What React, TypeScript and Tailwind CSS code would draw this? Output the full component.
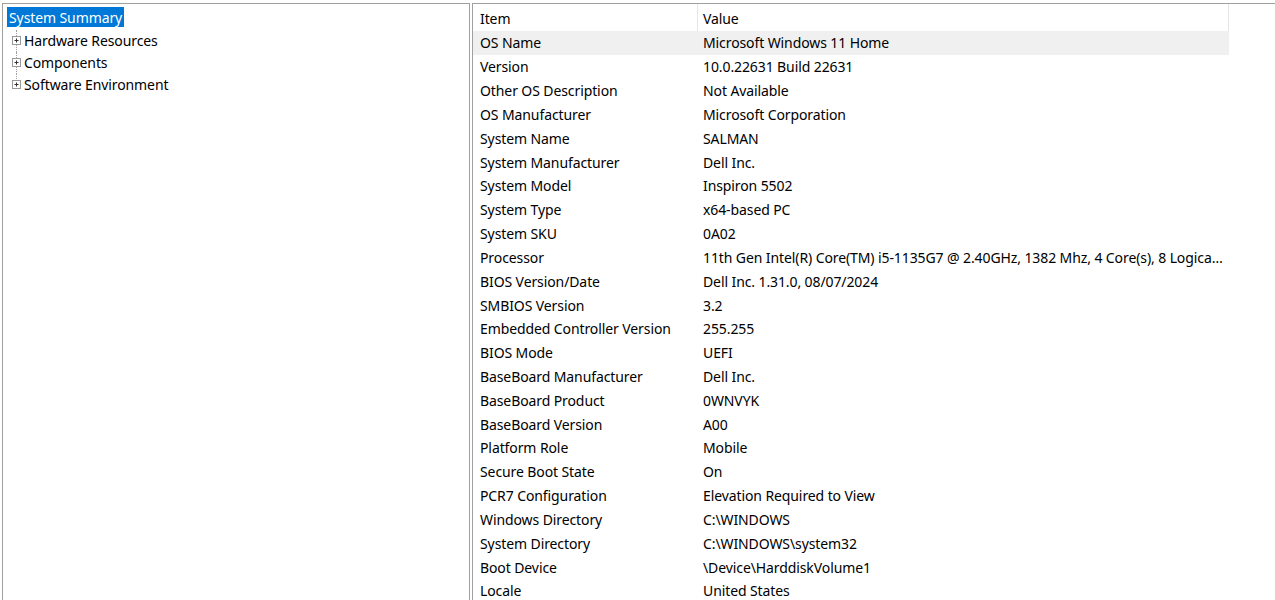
import type { ReactNode } from 'react'

const ROWS: [string, string][] = [
  ['OS Name', 'Microsoft Windows 11 Home'],
  ['Version', '10.0.22631 Build 22631'],
  ['Other OS Description', 'Not Available'],
  ['OS Manufacturer', 'Microsoft Corporation'],
  ['System Name', 'SALMAN'],
  ['System Manufacturer', 'Dell Inc.'],
  ['System Model', 'Inspiron 5502'],
  ['System Type', 'x64-based PC'],
  ['System SKU', '0A02'],
  [
    'Processor',
    '11th Gen Intel(R) Core(TM) i5-1135G7 @ 2.40GHz, 1382 Mhz, 4 Core(s), 8 Logical Processor(s)',
  ],
  ['BIOS Version/Date', 'Dell Inc. 1.31.0, 08/07/2024'],
  ['SMBIOS Version', '3.2'],
  ['Embedded Controller Version', '255.255'],
  ['BIOS Mode', 'UEFI'],
  ['BaseBoard Manufacturer', 'Dell Inc.'],
  ['BaseBoard Product', '0WNVYK'],
  ['BaseBoard Version', 'A00'],
  ['Platform Role', 'Mobile'],
  ['Secure Boot State', 'On'],
  ['PCR7 Configuration', 'Elevation Required to View'],
  ['Windows Directory', 'C:\\WINDOWS'],
  ['System Directory', 'C:\\WINDOWS\\system32'],
  ['Boot Device', '\\Device\\HarddiskVolume1'],
  ['Locale', 'United States'],
]

function PlusBox() {
  return (
    <svg width="11" height="11" viewBox="0 0 11 11" className="shrink-0">
      <rect x="1.5" y="1.5" width="8" height="8" fill="white" stroke="#9a9a9a" />
      <path d="M3.5 5.5h4M5.5 3.5v4" stroke="#333" />
    </svg>
  )
}

function TreeNode({ children, last }: { children: ReactNode; last?: boolean }) {
  return (
    <div className="relative flex h-[22px] items-center pl-[8px]">
      {/* dotted connector */}
      <span
        className={`absolute left-[13px] top-0 border-l border-dotted border-[#a0a0a0] ${
          last ? 'h-[11px]' : 'h-[22px]'
        }`}
      />
      <span className="relative z-10">
        <PlusBox />
      </span>
      <span className="ml-[2px] pt-[1px] text-black">{children}</span>
    </div>
  )
}

export default function App() {
  return (
    <div
      className="flex h-[600px] w-[1275px] overflow-hidden bg-white pt-[3px] text-[14px] leading-[20px] tracking-[-0.1px]"
      style={{ fontFamily: '"Segoe UI", "Noto Sans", "Liberation Sans", sans-serif' }}
    >
      {/* left tree */}
      <div className="ml-[2px] h-[700px] w-[468px] shrink-0 border-t border-l border-r border-[#a0a0a0]">
        <div className="pt-[3px]">
          <div className="ml-[4px] inline-flex h-[20px] items-center bg-[#0078d7] px-[2px] pt-[1px] text-white">
            System Summary
          </div>
          <div className="mt-[2px]">
            <TreeNode>Hardware Resources</TreeNode>
            <TreeNode>Components</TreeNode>
            <TreeNode last>Software Environment</TreeNode>
          </div>
        </div>
      </div>

      {/* right list */}
      <div className="ml-[2px] h-[700px] flex-1 border-t border-l border-[#a0a0a0]">
        <div className="w-[756px]">
          <div className="flex h-[27px] text-black">
            <div className="flex h-full w-[225px] items-center border-r border-[#e5e5e5] pl-[7px] pt-[3px]">Item</div>
            <div className="flex h-full flex-1 items-center border-r border-[#e5e5e5] pl-[5px] pt-[3px]">Value</div>
          </div>
          {ROWS.map(([k, v], i) => (
            <div
              key={k}
              className={`flex h-[23.83px] items-center pt-[1px] text-black ${i === 0 ? 'bg-[#f0f0f0]' : ''}`}
            >
              <div className="w-[225px] truncate pl-[7px]">{k}</div>
              <div className="min-w-0 flex-1 truncate pl-[5px] pr-[4px]">{v}</div>
            </div>
          ))}
        </div>
      </div>
    </div>
  )
}
